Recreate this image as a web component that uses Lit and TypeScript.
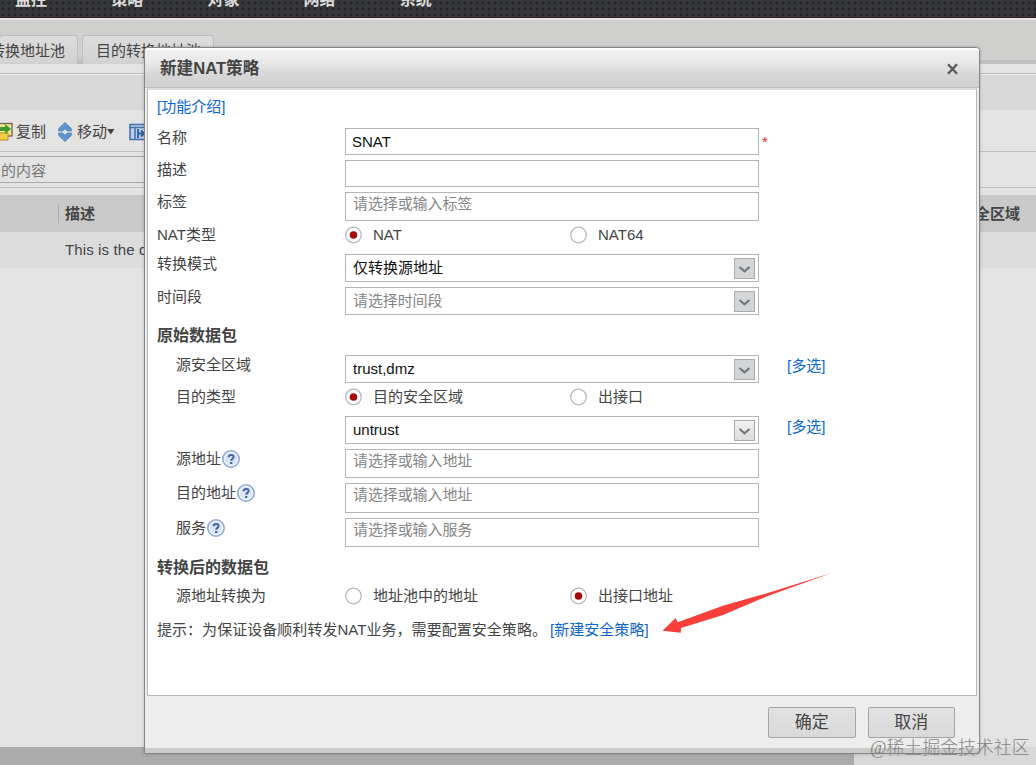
import { LitElement, html, css, svg, nothing } from "lit";
import { customElement, property } from "lit/decorators.js";

const FONT = css`"Liberation Sans", "Noto Sans CJK SC", sans-serif`;

type Radio = { text: string; on: boolean };
type Row = {
  h: number;
  label?: string;
  sub?: boolean;
  head?: boolean;
  help?: boolean;
  kind?: "text" | "tags" | "select";
  ch?: number;
  value?: string;
  hint?: string;
  lit?: boolean;
  must?: boolean;
  multi?: boolean;
  radios?: Radio[];
};

const ROWS: Row[] = [
  { h: 32, label: "名称", kind: "text", ch: 27, value: "SNAT", must: true },
  { h: 32, label: "描述", kind: "text", ch: 27 },
  { h: 33, label: "标签", kind: "tags", ch: 29, hint: "请选择或输入标签" },
  { h: 29, label: "NAT类型", radios: [{ text: "NAT", on: true }, { text: "NAT64", on: false }] },
  { h: 33, label: "转换模式", kind: "select", ch: 28, value: "仅转换源地址" },
  { h: 33, label: "时间段", kind: "select", ch: 28, hint: "请选择时间段" },
  { h: 35, label: "原始数据包", head: true },
  { h: 32, label: "源安全区域", sub: true, kind: "select", ch: 28, value: "trust,dmz", multi: true },
  { h: 29, label: "目的类型", sub: true, radios: [{ text: "目的安全区域", on: true }, { text: "出接口", on: false }] },
  { h: 33, kind: "select", ch: 28, value: "untrust", multi: true, lit: true },
  { h: 34, label: "源地址", sub: true, help: true, kind: "tags", ch: 29, hint: "请选择或输入地址" },
  { h: 35, label: "目的地址", sub: true, help: true, kind: "tags", ch: 30, hint: "请选择或输入地址" },
  { h: 34, label: "服务", sub: true, help: true, kind: "tags", ch: 29, hint: "请选择或输入服务" },
  { h: 34, label: "转换后的数据包", head: true },
  { h: 34, label: "源地址转换为", sub: true, radios: [{ text: "地址池中的地址", on: false }, { text: "出接口地址", on: true }] },
];

@customElement("nat-row")
class NatRow extends LitElement {
  @property({ attribute: false }) row!: Row;

  static styles = css`
    :host { display: block; }
    .row { display: flex; align-items: flex-start; box-sizing: border-box; }
    .label { width: 188px; flex: none; display: flex; align-items: center; line-height: 20px; height: 20px; box-sizing: border-box; }
    .sub { padding-left: 19px; }
    .head { font-weight: bold; font-size: 16px; line-height: 32px; height: 32px; }
    .field { box-sizing: border-box; width: 414px; flex: none; border: 1px solid #b5b5b7; background: #fff; display: flex; align-items: center; padding: 0 3px 0 7px; color: #111; }
    .field.tags { align-items: flex-start; line-height: 21px; }
    .field.text { padding-left: 6px; }
    .val { flex: 1; }
    .val.hint { color: #858585; letter-spacing: -0.1px; }
    .drop { width: 19px; height: 19px; border: 1px solid #aaabac; background: #d3d5d6; display: block; }
    .drop.lit { background: linear-gradient(#f2f2f2, #dcdcdc); }
    .star { color: #e2231a; padding-left: 3px; line-height: 28px; }
    .multi { color: #0a66cc; padding-left: 28px; line-height: 21px; }
    .radio { width: 225px; display: flex; align-items: center; height: 20px; gap: 11px; }
    .help { display: block; }
  `;

  radio(r: Radio) {
    return html`<span class="radio"
      ><svg width="17" height="18" viewBox="0 0 17 18">
        <circle cx="8.5" cy="9" r="7.8" fill="#fff" stroke="#b9b9b9" stroke-width="1.3" />
        ${r.on ? svg`<circle cx="8.5" cy="9" r="3.8" fill="#a30c0c"/>` : nothing}
      </svg><span>${r.text}</span></span>`;
  }

  render() {
    const r = this.row;
    return html`<div class="row" style="height:${r.h}px">
      <span class="label ${r.sub ? "sub" : ""} ${r.head ? "head" : ""}">
        ${r.label ?? nothing}${r.help
          ? html`<svg class="help" width="20" height="20" viewBox="0 0 20 20">
              <circle cx="10" cy="10" r="8.2" fill="#dbe6f4" stroke="#8fa9d6" stroke-width="1.6" />
              <circle cx="10" cy="10" r="6.7" fill="none" stroke="#f3f8fd" stroke-width="1" />
              <path d="M7.6 8.2C7.6 5.2 12.6 5.1 12.6 8C12.6 9.9 10.2 9.8 10.2 11.8" fill="none" stroke="#3f62a6" stroke-width="2" />
              <rect x="9.1" y="13" width="2.2" height="2" fill="#3f62a6" />
            </svg>`
          : nothing}
      </span>
      ${r.kind
        ? html`<div class="field ${r.kind}" style="height:${r.ch}px">
            <span class="val ${r.hint ? "hint" : ""}">${r.value ?? r.hint ?? ""}</span>
            ${r.kind === "select"
              ? html`<span class="drop ${r.lit ? "lit" : ""}"
                  ><svg width="19" height="19" viewBox="0 0 19 19">
                    <path d="M4.5 8L9.5 12.4L14.5 8" fill="none" stroke="#737577" stroke-width="2.1" /></svg
                ></span>`
              : nothing}
          </div>`
        : nothing}
      ${r.radios ? r.radios.map((x) => this.radio(x)) : nothing}
      ${r.must ? html`<span class="star">*</span>` : nothing}
      ${r.multi ? html`<span class="multi">[多选]</span>` : nothing}
    </div>`;
  }
}

@customElement("nat-dialog")
class NatDialog extends LitElement {
  static styles = css`
    :host { display: flex; flex-direction: column; box-sizing: border-box; width: 836px; height: 707px; border: 1px solid #858585; border-radius: 4px 4px 2px 2px; background: #ededed; overflow: hidden; box-shadow: 0 0 3px rgba(0,0,0,.25); }
    .title { height: 40px; box-sizing: border-box; display: flex; align-items: center; justify-content: space-between; padding: 0 21px 0 15px; border-top: 2px solid #fff; border-bottom: 1px solid #bebebe; background: linear-gradient(#f1f1f1 0%, #eaeaea 30%, #d6d6d6 68%, #d0d0d0 100%); font-size: 16.6px; font-weight: bold; color: #444; }
    .body { height: 608px; box-sizing: border-box; margin: 0 2px; border: 1px solid #b8b8b8; border-top: 2px solid #dcdcdc; background: #fff; padding: 0 9px; color: #444; }
    .link { color: #0a66cc; }
    .intro { line-height: 34px; height: 38px; }
    .tip { line-height: 20px; white-space: nowrap; letter-spacing: 0.04px; }
    .tip .link { padding-left: 3px; }
    .foot { flex: 1; display: flex; gap: 12px; justify-content: flex-end; padding: 11px 24px 0 0; border-bottom: 5px solid #cbcbcb; }
    .btn { box-sizing: border-box; width: 87.5px; height: 31px; border: 1px solid #a5a5a5; border-radius: 2px; background: linear-gradient(#e2e2e2, #d9d9d9); font-size: 17px; line-height: 30px; text-align: center; color: #444; }
  `;

  render() {
    return html`
      <div class="title">
        <span>新建NAT策略</span>
        <svg width="11" height="12" viewBox="0 0 11 12"><path d="M1 1.2L10 10.8M10 1.2L1 10.8" stroke="#5c5c5c" stroke-width="2.4" /></svg>
      </div>
      <div class="body">
        <div class="intro"><span class="link">[功能介绍]</span></div>
        ${ROWS.map((r) => html`<nat-row .row=${r}></nat-row>`)}
        <div class="tip">提示：为保证设备顺利转发NAT业务，需要配置安全策略。<span class="link">[新建安全策略]</span></div>
      </div>
      <div class="foot"><div class="btn">确定</div><div class="btn">取消</div></div>
    `;
  }
}

@customElement("app-root")
class AppRoot extends LitElement {
  static styles = css`
    :host { display: block; position: relative; width: 1036px; height: 765px; overflow: hidden; background: #e3e3e3; font: 15px/20px ${FONT}; color: #444; }
    .page { display: flex; flex-direction: column; height: 765px; white-space: nowrap; }
    .nav { height: 18px; box-sizing: border-box; display: flex; padding-left: 15px; overflow: hidden; background: radial-gradient(circle, #252527 1.1px, transparent 1.9px) 0 0 / 6px 6px, #363739; border-bottom: 1px solid #3a2226; }
    .nav span { width: 96.2px; height: 20px; margin-top: -10px; font-size: 16px; font-weight: bold; color: #dcdcdc; }
    .tabs { height: 46px; box-sizing: border-box; border-top: 2px solid #e6e4e4; border-bottom: 4px solid #c0c0c0; background: #cfcfce; display: flex; gap: 4px; padding-top: 15px; }
    .tab { height: 29px; box-sizing: border-box; border: 1px solid #bdbdbd; border-bottom: 0; border-radius: 4px 4px 0 0; background: linear-gradient(#dcdcdc, #d2d2d2); line-height: 29px; display: flex; justify-content: flex-end; padding-right: 12px; }
    .t1 { width: 79px; margin-left: -1px; }
    .t2 { width: 132px; }
    .gap { height: 10px; box-sizing: border-box; border-bottom: 1px solid #bcbcbc; }
    .caption { height: 36px; box-sizing: border-box; border-top: 1px solid #efefef; background: #d9d9d9; }
    .tools { height: 42px; box-sizing: border-box; border-bottom: 1px solid #bcbcbc; display: flex; align-items: center; padding-top: 2px; }
    .tools svg { flex: none; }
    .search { height: 36px; box-sizing: border-box; border-bottom: 1px solid #bcbcbc; padding-top: 4px; }
    .query { width: 420px; height: 27px; box-sizing: border-box; border: 1px solid #aaa; border-left: 0; line-height: 27px; color: #777; padding-left: 1px; }
    .thead { margin-top: 7px; height: 37px; background: #c9c9c9; display: flex; align-items: center; justify-content: space-between; padding: 0 16px 0 58px; font-weight: bold; line-height: 18px; }
    .thead .first { border-left: 1px solid #aaa; padding-left: 6px; }
    .trow { height: 36px; background: #dcdcdc; line-height: 36px; padding-left: 65px; letter-spacing: 0.12px; }
    .grow { flex: 1; }
    .foot { height: 18px; background: #d8d8d8; }
    .bar { width: 854px; height: 18px; background: #ababab; }
    .dialog { position: absolute; left: 144px; top: 47px; }
    .arrow { position: absolute; left: 660px; top: 568px; }
    .mark { position: absolute; left: 870px; top: 738px; font-size: 17.9px; font-weight: 300; font-family: "Liberation Serif", "Noto Sans CJK SC", serif; color: #858585; white-space: nowrap; }
  `;

  render() {
    return html`
      <div class="page">
        <div class="nav">${["监控", "策略", "对象", "网络", "系统"].map((t) => html`<span>${t}</span>`)}</div>
        <div class="tabs"><div class="tab t1">转换地址池</div><div class="tab t2">目的转换地址池</div></div>
        <div class="gap"></div>
        <div class="caption"></div>
        <div class="tools">
          <svg width="16" height="20" viewBox="0 0 16 20">
            <rect x="-4" y="1.5" width="16" height="12.5" fill="#f0e58a" stroke="#6f6350" stroke-width="1.3" />
            <path d="M-4 11H8V18H-4Z" fill="#f3cf45" stroke="#b98c1f" />
            <path d="M0 5H5V2L11 7L5 12V9H0Z" fill="#3f9a2e" />
          </svg>
          <span>复制</span>
          <svg width="31" height="20" viewBox="0 0 31 20">
            <path d="M19 .5L25.3 6.5V9H21.5L19 6.8L16.5 9H12.7V6.5Z" fill="#5f95cc" stroke="#4478b3" stroke-width=".7" />
            <path d="M19 19.5L25.3 13.5V11H21.5L19 13.2L16.5 11H12.7V13.5Z" fill="#5f95cc" stroke="#4478b3" stroke-width=".7" />
          </svg>
          <span>移动</span>
          <svg width="22" height="20" viewBox="0 0 22 20"><path d="M0 7H7.5L3.8 12.5Z" fill="#444" /></svg>
          <svg width="20" height="20" viewBox="0 0 20 20">
            <rect x="1" y="2.5" width="17" height="15" fill="#b9cfea" stroke="#4a74ad" stroke-width="1.6" />
            <path d="M1 5.5H18M6 5V17" stroke="#4a74ad" stroke-width="1.6" />
            <path d="M9 7V16M9 11.5H15M12 8.5L15 11.5L12 14.5" fill="none" stroke="#2c5f9f" stroke-width="1.8" />
          </svg>
        </div>
        <div class="search"><div class="query">的内容</div></div>
        <div class="thead"><span class="first">描述</span><span>安全区域</span></div>
        <div class="trow">This is the default</div>
        <div class="grow"></div>
        <div class="foot"><div class="bar"></div></div>
      </div>
      <nat-dialog class="dialog"></nat-dialog>
      <svg class="arrow" width="176" height="72" viewBox="0 0 176 72">
        <path d="M2.5 62.8L15.7 50L17.7 54.2L63 37.8L107 25.2L171.7 5L107 28.3L63 47L21 60L20.7 64.8Z" fill="#fa3e3a" />
      </svg>
      <div class="mark">@稀土掘金技术社区</div>
    `;
  }
}
